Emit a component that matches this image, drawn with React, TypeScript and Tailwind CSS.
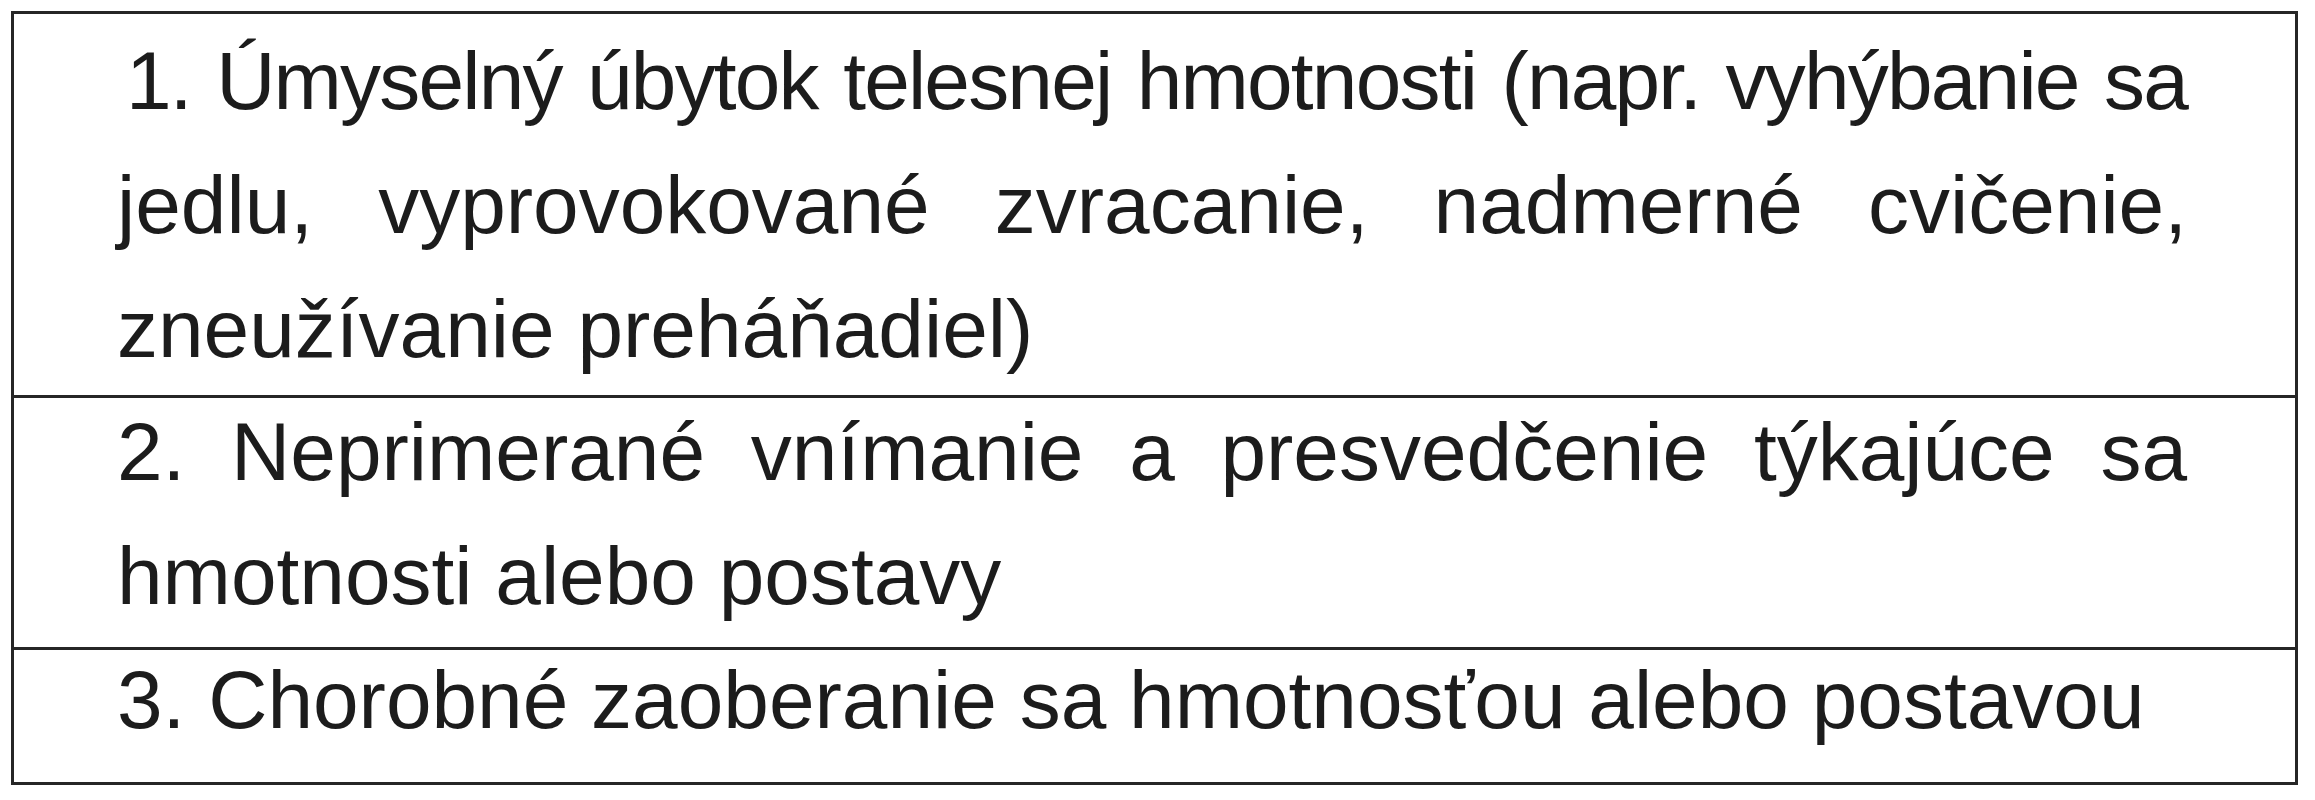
const rows = [
  {
    height: "h-[384px] border-b-[3px]",
    pad: "pt-[17px]",
    lines: [
      { text: "1. Úmyselný úbytok telesnej hmotnosti (napr. vyhýbanie sa", justify: true, extra: "pl-[9px] tracking-[-1.8px]" },
      { text: "jedlu, vyprovokované zvracanie, nadmerné cvičenie,", justify: true, extra: "" },
      { text: "zneužívanie preháňadiel)", justify: false, extra: "" },
    ],
  },
  {
    height: "h-[252px] border-b-[3px]",
    pad: "pt-[4px]",
    lines: [
      { text: "2. Neprimerané vnímanie a presvedčenie týkajúce sa", justify: true, extra: "" },
      { text: "hmotnosti alebo postavy", justify: false, extra: "" },
    ],
  },
  {
    height: "h-[132px]",
    pad: "pt-0",
    lines: [{ text: "3. Chorobné zaoberanie sa hmotnosťou alebo postavou", justify: false, extra: "" }],
  },
];

export default function App() {
  return (
    <div className="w-[2315px] h-[800px] bg-white pt-[11px] pl-[11px]">
      <div className="w-[2287px] h-[774px] border-[3px] border-[#262626] flex flex-col font-['Liberation_Sans',Arial,sans-serif] text-[82px] text-[#1c1c1c]">
        {rows.map((row, i) => (
          <div
            key={i}
            className={`${row.height} ${row.pad} border-[#262626] pl-[103px] pr-[108px] flex flex-col gap-[24px]`}
          >
            {row.lines.map((line, j) => (
              <div
                key={j}
                className={`leading-[100px] whitespace-nowrap ${line.extra} ${
                  line.justify ? "text-justify [text-align-last:justify]" : "text-left"
                }`}
              >
                {line.text}
              </div>
            ))}
          </div>
        ))}
      </div>
    </div>
  );
}
